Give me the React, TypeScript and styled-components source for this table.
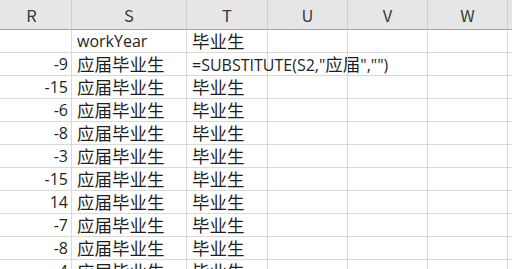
import React from "react";
import styled, { createGlobalStyle } from "styled-components";

const Global = createGlobalStyle`
  html, body { margin: 0; padding: 0; background: #ffffff; overflow: hidden; }
  body { font-family: "Open Sans", "Noto Sans CJK SC", sans-serif; }
`;

const COLS = [80, 115, 81, 80, 80, 80, 40];
const LETTERS = ["R", "S", "T", "U", "V", "W", ""];

const Sheet = styled.div`
  margin-left: -8px;
  display: grid;
  grid-template-columns: ${COLS.map((c) => `${c}px`).join(" ")};
  width: max-content;
`;

const HeadCell = styled.div`
  height: 29px;
  background: #e6e6e6;
  border-bottom: 1px solid #a0a0a0;
  border-right: 1px solid #cfcfcf;
  display: flex;
  align-items: center;
  justify-content: center;
  font-family: "Noto Sans CJK SC", sans-serif;
  font-size: 16.5px;
  color: #3a3a3a;
  box-sizing: content-box;
`;

const Cell = styled.div<{ $align?: "left" | "right" }>`
  height: 22px;
  border-bottom: 1px solid #d9d9d9;
  border-right: 1px solid #d9d9d9;
  display: flex;
  align-items: center;
  justify-content: ${(p) => (p.$align === "right" ? "flex-end" : "flex-start")};
  padding: 0 3px 0 5px;
  font-family: "Open Sans", "Noto Sans CJK SC", sans-serif;
  font-size: 16px;
  color: #1f1f1f;
  white-space: nowrap;
  overflow: visible;
  line-height: 22px;
`;

const Han = styled.span`
  font-family: "Noto Sans CJK SC", sans-serif;
  font-size: 17.5px;
  letter-spacing: 0;
`;

function Text({ value }: { value?: string }) {
  if (!value) return null;
  const parts = value.split(/([\u4e00-\u9fff]+)/).filter(Boolean);
  return (
    <span>
      {parts.map((p, i) =>
        /[\u4e00-\u9fff]/.test(p) ? <Han key={i}>{p}</Han> : <React.Fragment key={i}>{p}</React.Fragment>
      )}
    </span>
  );
}

type Row = { r?: string; s?: string; t?: string };

const ROWS: Row[] = [
  { s: "workYear", t: "毕业生" },
  { r: "-9", s: "应届毕业生", t: '=SUBSTITUTE(S2,"应届","")' },
  { r: "-15", s: "应届毕业生", t: "毕业生" },
  { r: "-6", s: "应届毕业生", t: "毕业生" },
  { r: "-8", s: "应届毕业生", t: "毕业生" },
  { r: "-3", s: "应届毕业生", t: "毕业生" },
  { r: "-15", s: "应届毕业生", t: "毕业生" },
  { r: "14", s: "应届毕业生", t: "毕业生" },
  { r: "-7", s: "应届毕业生", t: "毕业生" },
  { r: "-8", s: "应届毕业生", t: "毕业生" },
  { r: "-4", s: "应届毕业生", t: "毕业生" },
];

export default function App() {
  return (
    <>
      <Global />
      <Sheet>
        {LETTERS.map((l, i) => (
          <HeadCell key={`h${i}`}>{l}</HeadCell>
        ))}
        {ROWS.map((row, ri) => (
          <React.Fragment key={ri}>
            <Cell $align="right">
              <Text value={row.r} />
            </Cell>
            <Cell>
              <Text value={row.s} />
            </Cell>
            <Cell>
              <Text value={row.t} />
            </Cell>
            <Cell />
            <Cell />
            <Cell />
            <Cell />
          </React.Fragment>
        ))}
      </Sheet>
    </>
  );
}
